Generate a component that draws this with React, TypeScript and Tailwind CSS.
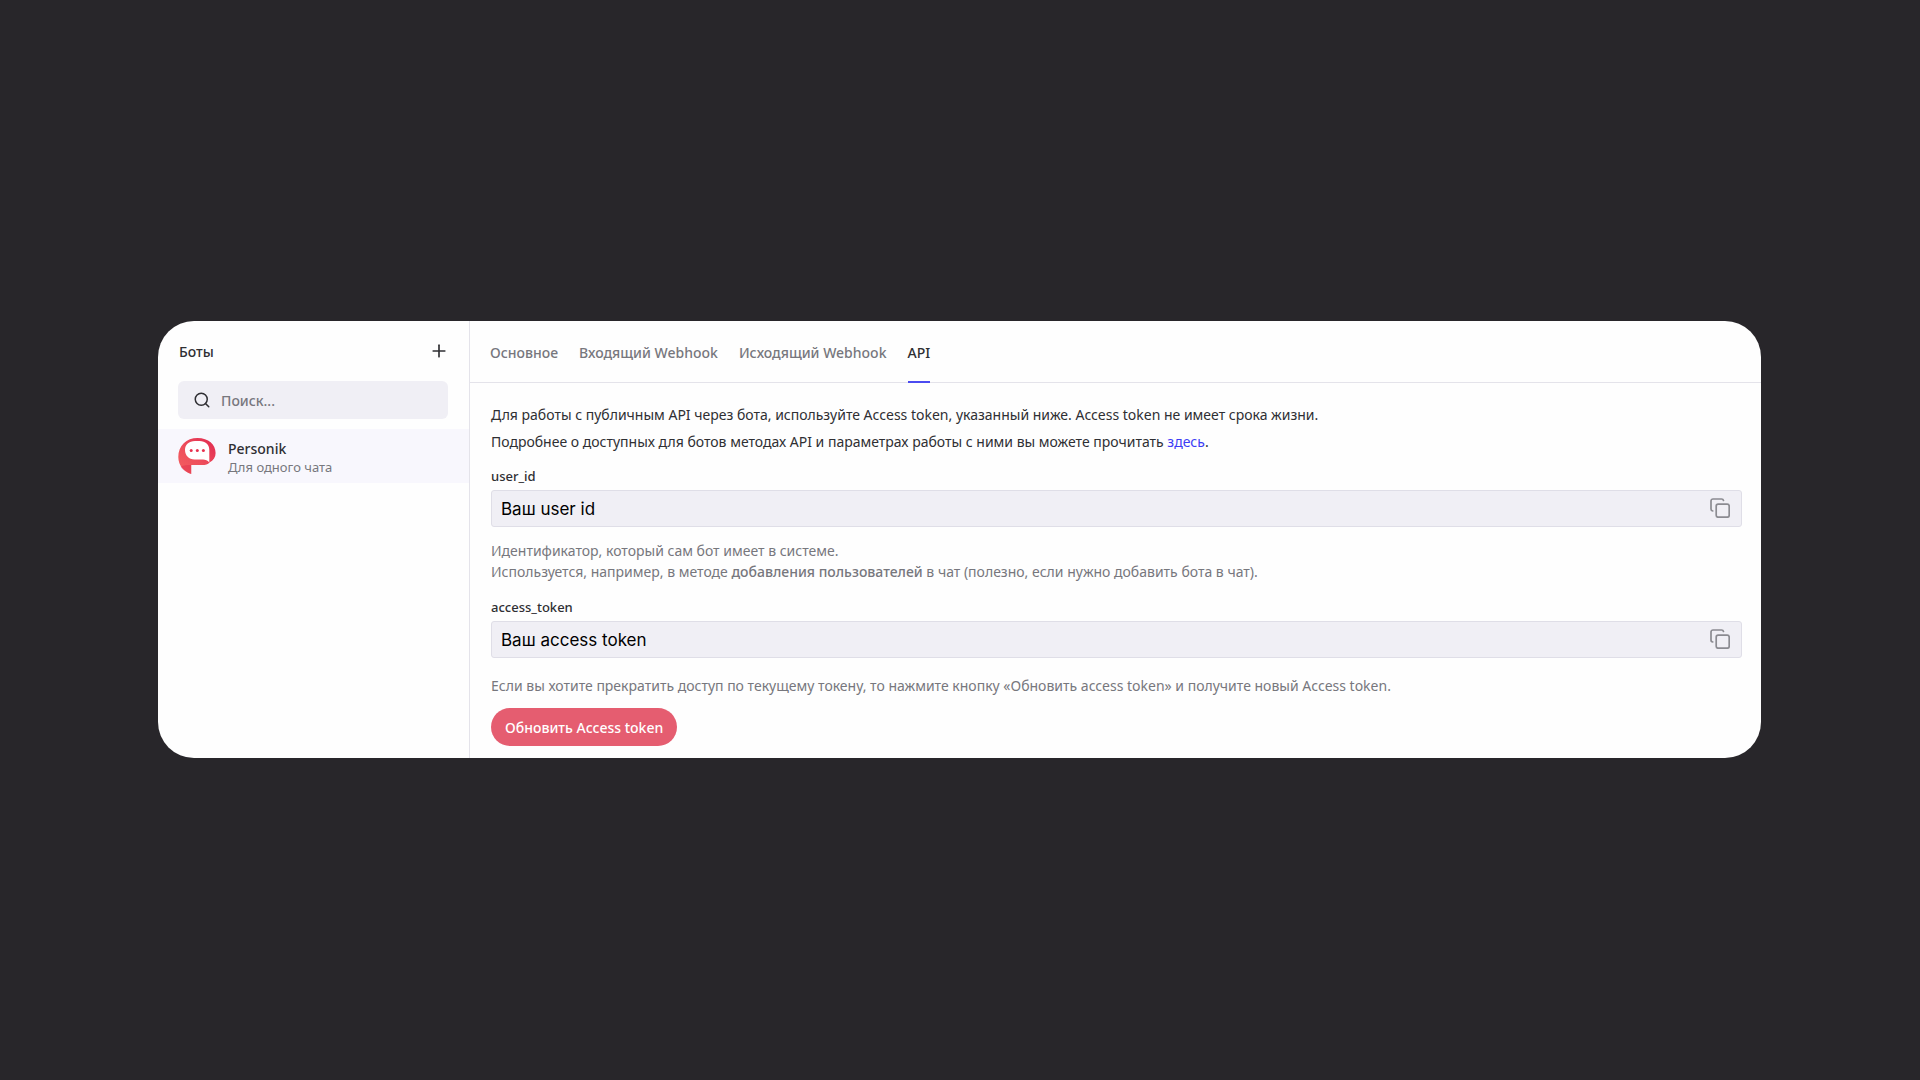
import { useState } from 'react';
import { Plus, Search } from 'lucide-react';

const tabs = ['Основное', 'Входящий Webhook', 'Исходящий Webhook', 'API'];

function BotAvatar() {
  return (
    <svg className="size-[38px] shrink-0" viewBox="0 0 38 38" aria-hidden="true">
      <defs>
        <linearGradient id="avatar" x1="0" y1="1" x2="1" y2="0">
          <stop offset="0" stopColor="#f4605f" />
          <stop offset="0.45" stopColor="#ee4f5c" />
          <stop offset="1" stopColor="#e02850" />
        </linearGradient>
      </defs>
      <path
        d="M19.500 1C30.500 1 37.600 7.500 37.600 16C37.600 20 35.500 23.500 31.500 25.500C30 27.500 27.500 28 24 28H13.200V37C6 34.500 .3 28.500 .3 20C.3 8.500 8.500 1 19.500 1Z"
        fill="url(#avatar)"
      />
      <path d="M2.500 29.500C6 28 9 28 13.200 28V37C9 35.500 4.500 33 2.500 29.500Z" fill="#e02c4c" opacity="0.45" />
      <path
        d="M17 4H21.500C27.500 4 31.300 7.500 31.300 13V25.500C29.500 23.300 27.500 22.500 25 22.500H16.500C11 22.500 7 18.500 7 13C7 7.500 11 4 17 4Z"
        fill="#fff"
      />
      <circle cx="13.200" cy="13.500" r="1.500" fill="#e8314f" />
      <circle cx="19.300" cy="13.500" r="1.500" fill="#e8314f" />
      <circle cx="25.400" cy="13.500" r="1.500" fill="#e8314f" />
    </svg>
  );
}

function CopyIcon() {
  return (
    <svg className="size-5" viewBox="0 0 20 20" fill="none" stroke="#8b8b91" strokeWidth="1.700" strokeLinecap="round" aria-hidden="true">
      <rect x="6.200" y="6.200" width="13" height="13" rx="2" />
      <path d="M2.800 13A2 2 0 0 1 1 11V3A2 2 0 0 1 3 1H11.500A2 2 0 0 1 13.500 2.500" />
    </svg>
  );
}

interface TokenFieldProps {
  id: string;
  value: string;
}

function TokenField({ id, value }: TokenFieldProps) {
  return (
    <div>
      <label htmlFor={id} className="block text-[13px] leading-5 font-medium text-[#2f2f33]">
        {id}
      </label>
      <div className="mt-1 flex h-[37px] items-center rounded-[3px] border border-[#dfdee7] bg-[#f0eff5] pr-[11px] pl-[9px]">
        <input
          id={id}
          readOnly
          value={value}
          className="min-w-0 flex-1 bg-transparent pt-1 font-['Inter',sans-serif] text-[17px] text-black outline-none"
        />
        <button type="button" aria-label={`Скопировать ${id}`} onClick={() => navigator.clipboard?.writeText(value)}>
          <CopyIcon />
        </button>
      </div>
    </div>
  );
}

export default function App() {
  const [activeTab, setActiveTab] = useState('API');
  const [query, setQuery] = useState('');

  return (
    <div className="flex min-h-screen items-center bg-[#28262a] pr-[159px] pb-0.5 pl-[158px] font-['Noto_Sans',sans-serif] text-[14px] text-[#2f2f33]">
      <div className="flex w-full overflow-hidden rounded-[36px] bg-[#fefefe]">
        <aside className="w-[312px] shrink-0 border-r border-[#e4e3ea]">
          <div className="flex h-[60px] items-center justify-between pr-5 pl-[21px]">
            <h1 className="pt-0.5 font-medium">Боты</h1>
            <button type="button" aria-label="Добавить бота">
              <Plus className="size-5" strokeWidth={2} />
            </button>
          </div>
          <label className="mr-[21px] ml-5 flex h-[38px] items-center gap-[10px] rounded-md bg-[#f0eff5] px-[15px]">
            <Search className="size-[18px] shrink-0" strokeWidth={2} />
            <input
              value={query}
              onChange={(e) => setQuery(e.target.value)}
              placeholder="Поиск..."
              aria-label="Поиск"
              className="min-w-0 flex-1 bg-transparent pt-0.5 font-medium outline-none placeholder:text-[#77777d]"
            />
          </label>
          <a href="#personik" className="mt-2.5 flex h-[54px] items-center gap-3 bg-[#f8f7fd] pl-5">
            <BotAvatar />
            <div className="pt-[5px]">
              <div className="leading-[18px] font-medium">Personik</div>
              <div className="text-[13px] leading-[18px] text-[#77777d]">Для одного чата</div>
            </div>
          </a>
        </aside>

        <main className="min-w-0 flex-1">
          <nav className="flex h-[62px] gap-[21px] border-b border-[#e4e3ea] px-5">
            {tabs.map((tab) => (
              <button
                key={tab}
                type="button"
                onClick={() => setActiveTab(tab)}
                className={`-mb-px border-y-2 border-t-transparent pt-0.5 font-medium ${
                  tab === activeTab ? 'border-b-[#4b4bf0]' : 'border-b-transparent text-[#77777d]'
                }`}
              >
                {tab}
              </button>
            ))}
          </nav>

          <div className="pt-[18px] pr-[19px] pb-3 pl-[21px]">
            <p className="leading-[27px]">
              Для работы с публичным API через бота, используйте Access token, указанный ниже. Access token не имеет срока жизни.
              <br />
              Подробнее о доступных для ботов методах API и параметрах работы с ними вы можете прочитать{' '}
              <a href="#docs" className="text-[#3d3df5]">здесь</a>.
            </p>
            <div className="mt-[11px]">
              <TokenField id="user_id" value="Ваш user id" />
            </div>
            <p className="mt-[13px] leading-[21px] text-[#77777d]">
              Идентификатор, который сам бот имеет в системе.
              <br />
              Используется, например, в методе <b className="font-medium">добавления пользователей</b> в чат (полезно, если нужно добавить бота в чат).
            </p>
            <div className="mt-[15px]">
              <TokenField id="access_token" value="Ваш access token" />
            </div>
            <p className="mt-[17px] leading-[21px] text-[#77777d]">
              Если вы хотите прекратить доступ по текущему токену, то нажмите кнопку «Обновить access token» и получите новый Access token.
            </p>
            <button type="button" className="mt-3 h-[38px] rounded-full bg-[#e55d70] px-[14px] pt-px font-medium text-white">
              Обновить Access token
            </button>
          </div>
        </main>
      </div>
    </div>
  );
}
